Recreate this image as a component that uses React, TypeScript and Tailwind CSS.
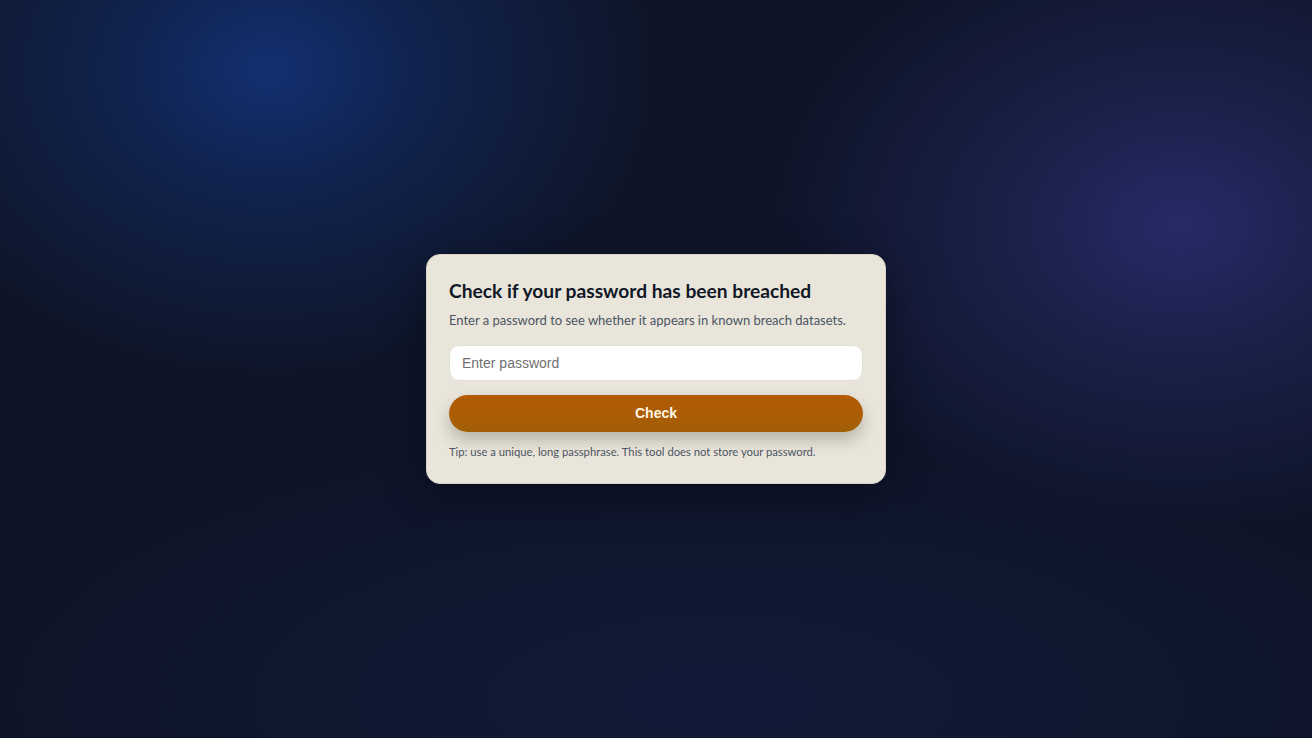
import React, { useState } from 'react';

const App: React.FC = () => {
  const [password, setPassword] = useState('');

  return (
    <div className="relative flex h-[738px] w-full items-center justify-center overflow-hidden bg-[#0e1529] font-['Lato',sans-serif]">
      {/* Background glows */}
      <div className="pointer-events-none absolute inset-0 bg-[radial-gradient(ellipse_380px_300px_at_270px_70px,#133071_0%,rgba(19,48,113,0.5)_40%,rgba(14,21,41,0)_100%)]" />
      <div className="pointer-events-none absolute inset-0 bg-[radial-gradient(ellipse_400px_300px_at_1180px_225px,#272a66_0%,rgba(39,42,102,0.5)_45%,rgba(14,21,41,0)_100%)]" />
      <div className="pointer-events-none absolute inset-0 bg-[radial-gradient(ellipse_700px_260px_at_720px_700px,rgba(20,30,70,0.5)_0%,rgba(14,21,41,0)_100%)]" />

      <div className="relative w-[460px] rounded-[14px] border border-[#d9d4c6] bg-[#e9e5da] px-[22px] pt-[23px] pb-[23px] shadow-[0_10px_40px_rgba(0,0,0,0.35)]">
        <h1 className="text-[19.2px] leading-[26px] font-bold text-[#111827]">
          Check if your password has been breached
        </h1>
        <p className="mt-[6px] text-[13px] leading-[20px] text-[#4b5563]">
          Enter a password to see whether it appears in known breach datasets.
        </p>
        <input
          type="password"
          value={password}
          onChange={(e) => setPassword(e.target.value)}
          placeholder="Enter password"
          className="mt-[15px] block h-9 w-full rounded-[10px] border border-[#e3ded2] bg-white px-3 font-['Liberation_Sans',sans-serif] text-[14px] text-[#111827] outline-none placeholder:text-[#707070]"
        />
        <button className="mt-[14px] block h-[37px] w-full cursor-pointer rounded-full bg-[linear-gradient(180deg,#b35a06,#a25f05)] font-['Liberation_Sans',sans-serif] text-[14px] font-bold text-[#fdf6e3] shadow-[0_8px_16px_rgba(0,0,0,0.22)]">
          Check
        </button>
        <p className="mt-3 text-[11.25px] leading-4 text-[#4b5563]">
          Tip: use a unique, long passphrase. This tool does not store your password.
        </p>
      </div>
    </div>
  );
};

export default App;
